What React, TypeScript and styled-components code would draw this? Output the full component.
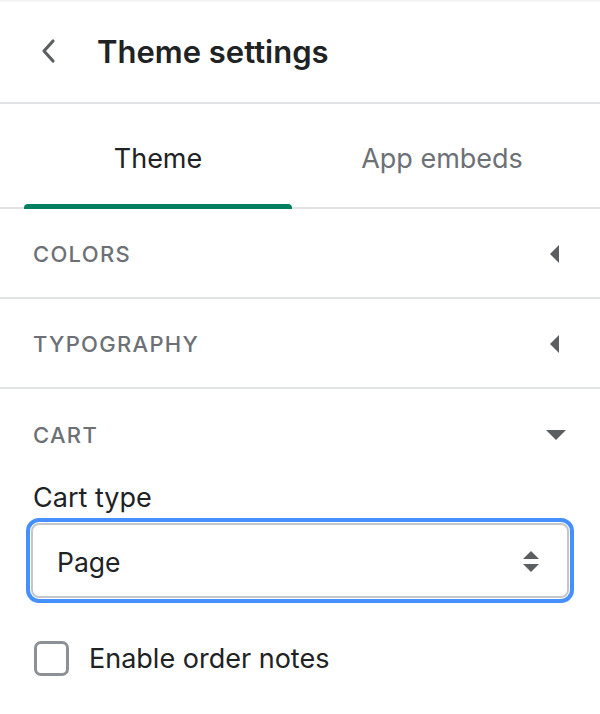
import React, { useState } from 'react';
import styled, { createGlobalStyle } from 'styled-components';

const GlobalStyle = createGlobalStyle`
  html, body {
    margin: 0;
    padding: 0;
    background: #ffffff;
  }
  body {
    font-family: Inter, "Noto Sans", "Liberation Sans", sans-serif;
    color: #202223;
    -webkit-font-smoothing: antialiased;
  }
`;

const sections = ['Colors', 'Typography'];

export default function App() {
  const [tab, setTab] = useState(0);
  const [notes, setNotes] = useState(false);

  return (
    <>
      <GlobalStyle />
      <Panel>
        <Header>
          <BackButton aria-label="Back">
            <svg width="20" height="26" viewBox="0 0 20 26">
              <path d="M14 3 L5 13 L14 23" fill="none" stroke="#5c5f62" strokeWidth="3.2" strokeLinecap="round" strokeLinejoin="round" />
            </svg>
          </BackButton>
          <Title>Theme settings</Title>
        </Header>

        <TabBar>
          {['Theme', 'App embeds'].map((t, i) => (
            <Tab key={t} $active={tab === i} onClick={() => setTab(i)}>
              {t}
            </Tab>
          ))}
        </TabBar>

        {sections.map((s) => (
          <SectionRow key={s}>
            <SectionTitle>{s}</SectionTitle>
            <svg width="10" height="20" viewBox="0 0 10 20">
              <path d="M10 1 L1 10 L10 19 Z" fill="#5c5f62" />
            </svg>
          </SectionRow>
        ))}

        <CartHeader>
          <SectionTitle>Cart</SectionTitle>
          <svg width="20" height="10" viewBox="0 0 20 10">
            <path d="M0 0 L20 0 L10 10 Z" fill="#5c5f62" />
          </svg>
        </CartHeader>

        <CartBody>
          <FieldLabel>Cart type</FieldLabel>
          <FocusRing>
            <SelectBox>
              <span>Page</span>
              <svg width="18" height="22" viewBox="0 0 18 22">
                <path d="M9 0 L17 8 L1 8 Z" fill="#5c5f62" />
                <path d="M1 13 L17 13 L9 21 Z" fill="#5c5f62" />
              </svg>
            </SelectBox>
          </FocusRing>
          <CheckRow onClick={() => setNotes(!notes)}>
            <CheckBox $checked={notes} />
            <CheckLabel>Enable order notes</CheckLabel>
          </CheckRow>
        </CartBody>
      </Panel>
    </>
  );
}

const Panel = styled.div`
  width: 600px;
  min-height: 714px;
  background: #fff;
  box-shadow: inset 0 3px 3px -2px rgba(0, 0, 0, 0.08);
`;

const Header = styled.div`
  height: 104px;
  box-sizing: border-box;
  border-bottom: 2px solid #e1e3e5;
  display: flex;
  align-items: center;
  padding: 0 0 0 39px;
`;

const BackButton = styled.button`
  border: 0;
  background: none;
  padding: 0;
  width: 58px;
  display: flex;
  align-items: center;
  cursor: pointer;
`;

const Title = styled.h1`
  margin: 0;
  font-size: 31px;
  font-weight: 600;
  color: #202223;
`;

const TabBar = styled.div`
  height: 105px;
  box-sizing: border-box;
  display: flex;
  gap: 16px;
  padding: 0 24px;
  box-shadow: inset 0 -2px 0 #e1e3e5;
`;

const Tab = styled.div<{ $active: boolean }>`
  flex: 1;
  position: relative;
  display: flex;
  align-items: center;
  justify-content: center;
  padding-top: 4px;
  font-size: 27px;
  color: ${(p) => (p.$active ? '#202223' : '#6d7175')};
  cursor: pointer;

  &::after {
    content: '';
    position: absolute;
    left: 0;
    right: 0;
    bottom: 0;
    height: 5px;
    border-radius: 4px 4px 0 0;
    background: ${(p) => (p.$active ? '#008060' : 'transparent')};
  }
`;

const SectionRow = styled.div`
  height: 90px;
  box-sizing: border-box;
  border-bottom: 2px solid #e1e3e5;
  display: flex;
  align-items: center;
  justify-content: space-between;
  padding: 2px 41px 0 33px;
`;

const SectionTitle = styled.div`
  font-size: 22px;
  font-weight: 500;
  text-transform: uppercase;
  letter-spacing: 1.3px;
  color: #6d7175;
`;

const CartHeader = styled(SectionRow)`
  border-bottom: 0;
  padding: 2px 34px 0 33px;
`;

const CartBody = styled.div`
  padding: 0 26px;
`;

const FieldLabel = styled.div`
  margin: 4px 0 0 7px;
  font-size: 27px;
  line-height: 30px;
  color: #202223;
`;

const FocusRing = styled.div`
  margin-top: 5px;
  height: 85px;
  box-sizing: border-box;
  border: 4px solid #458fff;
  border-radius: 13px;
  padding: 1px;
`;

const SelectBox = styled.div`
  height: 100%;
  box-sizing: border-box;
  border: 2px solid #c4c7ca;
  border-radius: 8px;
  display: flex;
  align-items: center;
  justify-content: space-between;
  padding: 2px 27px 0 24px;
  font-size: 26.5px;
  color: #202223;
`;

const CheckRow = styled.label`
  margin-top: 38px;
  display: flex;
  align-items: center;
  gap: 20px;
  padding-left: 8px;
  cursor: pointer;
`;

const CheckBox = styled.span<{ $checked: boolean }>`
  width: 35px;
  height: 35px;
  box-sizing: border-box;
  border: 3px solid #8c9196;
  border-radius: 7px;
  background: ${(p) => (p.$checked ? '#008060' : '#fff')};
`;

const CheckLabel = styled.span`
  font-size: 27px;
  color: #202223;
`;
